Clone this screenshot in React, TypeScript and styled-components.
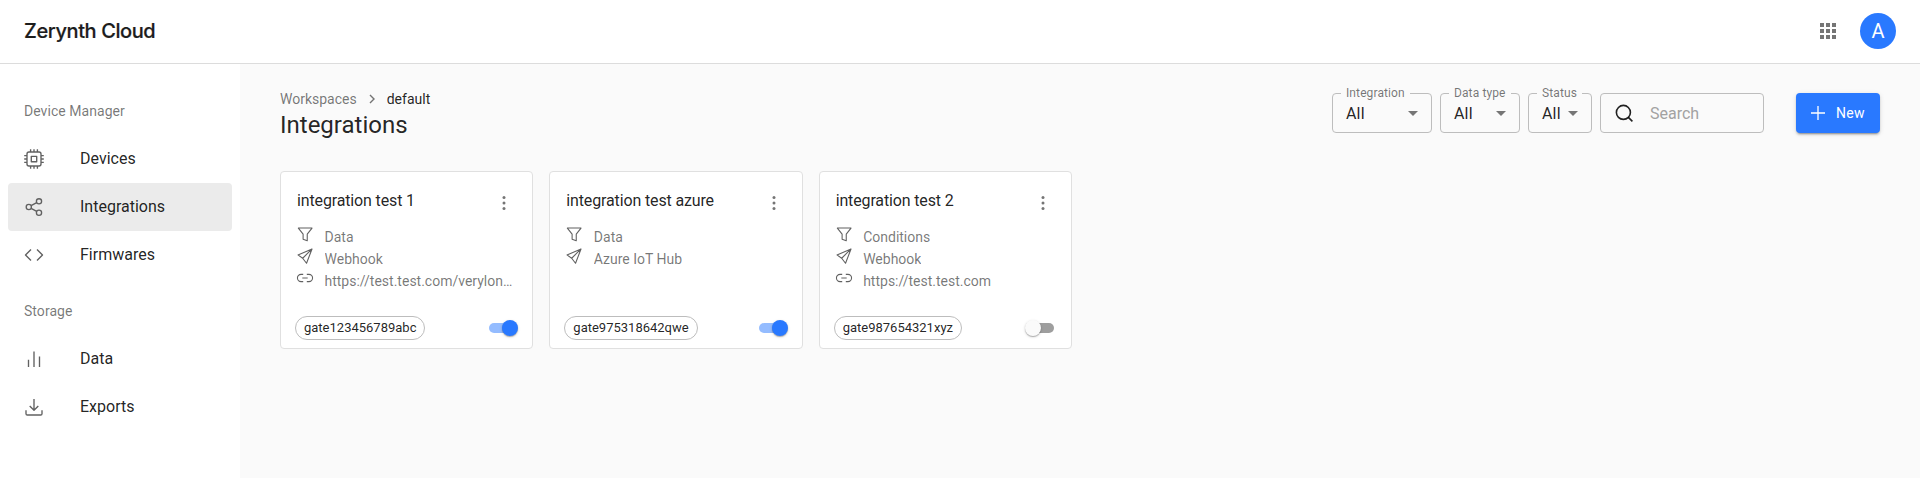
import React from 'react';
import styled, { createGlobalStyle } from 'styled-components';

const GlobalStyle = createGlobalStyle`
  *, *::before, *::after { box-sizing: border-box; }
  body {
    margin: 0;
    background: #fafafa;
    color: rgba(0, 0, 0, 0.87);
    font-family: Roboto, "Liberation Sans", sans-serif;
    font-size: 16px;
  }
`;

const Page = styled.div`
  display: flex;
  flex-direction: column;
  height: 478px;
  overflow: hidden;
`;

const Header = styled.header`
  display: flex;
  align-items: center;
  height: 64px;
  flex: none;
  padding: 0 24px 1px;
  background: #fff;
  border-bottom: 1px solid #dcdcdc;
`;

const Brand = styled.div`
  flex: 1;
  font-family: Inter, sans-serif;
  font-size: 20px;
  font-weight: 500;
  line-height: 24px;
  letter-spacing: -0.4px;
  color: #1c1c1c;
  -webkit-text-stroke: 0.2px #1c1c1c;
`;

const AppsGrid = styled.div`
  display: grid;
  grid-template-columns: repeat(3, 4px);
  grid-auto-rows: 4px;
  gap: 2px;
  margin-right: 24px;
`;

const AppsDot = styled.span`
  background: #757575;
`;

const Avatar = styled.div`
  display: flex;
  align-items: center;
  justify-content: center;
  width: 36px;
  height: 36px;
  border-radius: 50%;
  background: #2979ff;
  color: #fff;
  font-size: 20px;
`;

const Body = styled.div`
  display: flex;
  flex: 1;
`;

const Sidebar = styled.nav`
  width: 240px;
  flex: none;
  padding: 23px 8px 0;
  background: #fff;
`;

const NavHeading = styled.div`
  height: 48px;
  padding: 0 16px;
  font-size: 14px;
  line-height: 48px;
  letter-spacing: 0.05px;
  color: rgba(0, 0, 0, 0.54);
`;

const NavGroup = styled.div`
  margin-bottom: 8px;
`;

const NavItem = styled.a<{ $active?: boolean }>`
  display: flex;
  align-items: center;
  height: 48px;
  padding: 0 16px;
  border-radius: 4px;
  background: ${(p) => (p.$active ? '#ebebeb' : 'transparent')};
  line-height: 24px;
`;

const NavIcon = styled.span`
  display: flex;
  width: 56px;
  color: #616161;
`;

const Main = styled.main`
  flex: 1;
  padding: 24px 40px;
`;

const Toolbar = styled.div`
  display: flex;
  align-items: flex-start;
  justify-content: space-between;
  height: 83px;
`;

const Crumbs = styled.div`
  display: flex;
  align-items: center;
  height: 22px;
  font-size: 14px;
  color: rgba(0, 0, 0, 0.54);
`;

const CrumbSeparator = styled.svg`
  margin: 0 7px;
`;

const Current = styled.span`
  color: rgba(0, 0, 0, 0.87);
`;

const Title = styled.h1`
  margin: 0;
  font-size: 24px;
  font-weight: 400;
  line-height: 30px;
`;

const Controls = styled.div`
  display: flex;
  gap: 8px;
  padding-top: 5px;
`;

const Select = styled.div<{ $width: number }>`
  position: relative;
  display: flex;
  align-items: center;
  justify-content: space-between;
  width: ${(p) => p.$width}px;
  height: 40px;
  padding: 0 13px;
  border: 1px solid #bdbdbd;
  border-radius: 4px;
  letter-spacing: 0.15px;
`;

const SelectLabel = styled.span`
  position: absolute;
  top: -8px;
  left: 8px;
  padding: 0 5px;
  background: #fafafa;
  font-size: 12px;
  line-height: 14px;
  letter-spacing: 0.11px;
  white-space: nowrap;
  color: rgba(0, 0, 0, 0.54);
`;

const Caret = styled.span`
  border: 5px solid transparent;
  border-top-color: #757575;
  border-bottom: 0;
`;

const SearchBox = styled.div`
  display: flex;
  align-items: center;
  width: 164px;
  height: 40px;
  padding-left: 11px;
  border: 1px solid #bdbdbd;
  border-radius: 4px;
  color: #a2a2a2;
`;

const SearchIcon = styled.svg`
  margin-right: 14px;
  color: rgba(0, 0, 0, 0.87);
`;

const NewButton = styled.button`
  display: flex;
  align-items: center;
  width: 84px;
  height: 40px;
  margin-left: 24px;
  padding: 0 0 0 15px;
  gap: 11px;
  border: 0;
  border-radius: 4px;
  background: #2979ff;
  box-shadow: 0 3px 1px -2px rgba(0, 0, 0, 0.2), 0 2px 2px rgba(0, 0, 0, 0.14), 0 1px 5px rgba(0, 0, 0, 0.12);
  color: #fff;
  font: 400 14px Roboto, sans-serif;
  letter-spacing: 0.3px;
`;

const CardGrid = styled.div`
  display: grid;
  grid-template-columns: repeat(6, 1fr);
  gap: 16px;
`;

const Card = styled.article`
  display: flex;
  flex-direction: column;
  min-width: 0;
  height: 178px;
  padding: 16px 15px 8px 16px;
  border: 1px solid #e0e0e0;
  border-radius: 4px;
  background: #fff;
`;

const CardHead = styled.div`
  display: flex;
  justify-content: space-between;
  height: 37px;
  line-height: 25px;
  letter-spacing: -0.14px;
`;

const Dots = styled.svg`
  margin: 3px 1px 0 0;
  color: #757575;
`;

const Details = styled.div`
  flex: 1;
`;

const Detail = styled.div`
  display: flex;
  height: 22px;
  font-size: 14px;
  line-height: 25px;
  color: rgba(0, 0, 0, 0.54);
`;

const DetailIcon = styled.span`
  flex: none;
  width: 28.5px;
  margin-left: -1px;
  color: #616161;
  svg { display: block; }
`;

const DetailText = styled.span`
  min-width: 0;
  overflow: hidden;
  text-overflow: ellipsis;
  white-space: nowrap;
`;

const CardFoot = styled.div`
  display: flex;
  align-items: center;
  justify-content: space-between;
  margin-left: -2px;
`;

const Chip = styled.span`
  height: 24px;
  padding: 0 8px;
  border: 1px solid #bdbdbd;
  border-radius: 12px;
  font-size: 13px;
  line-height: 22px;
`;

const Track = styled.span<{ $on: boolean }>`
  display: flex;
  align-items: center;
  justify-content: ${(p) => (p.$on ? 'flex-end' : 'flex-start')};
  width: 26px;
  height: 10px;
  margin-right: 2px;
  border-radius: 5px;
  background: ${(p) => (p.$on ? '#94bcff' : '#9e9e9e')};
`;

const Thumb = styled.span<{ $on: boolean }>`
  flex: none;
  width: 16px;
  height: 16px;
  margin: 0 ${(p) => (p.$on ? '-3px' : '0')} 0 ${(p) => (p.$on ? '0' : '-3px')};
  border-radius: 50%;
  background: ${(p) => (p.$on ? '#2979ff' : '#fafafa')};
  box-shadow: 0 1px 1px rgba(0, 0, 0, 0.24), 0 1px 3px rgba(0, 0, 0, 0.16);
`;

type IconName = 'chip' | 'share' | 'code' | 'bars' | 'download' | 'filter' | 'send' | 'link';

const shapes: Record<IconName, React.ReactNode> = {
  chip: (
    <>
      <rect x="3" y="3" width="14" height="14" rx="2" />
      <rect x="7.3" y="7.3" width="5.4" height="5.4" />
      <path d="M6.6 3V.2M10 3V.2M13.4 3V.2M6.6 19.8V17M10 19.8V17M13.4 19.8V17M3 6.6H.2M3 10H.2M3 13.4H.2M19.8 6.6H17M19.8 10H17M19.8 13.4H17" />
    </>
  ),
  share: (
    <>
      <circle cx="4.8" cy="10" r="2.6" />
      <circle cx="15" cy="4.3" r="2.6" />
      <circle cx="15" cy="15.7" r="2.6" />
      <path d="M7.1 8.7l5.6-3.1M7.1 11.3l5.6 3.1" />
    </>
  ),
  code: <path d="M7 4.5L1.5 10 7 15.5M13 4.5l5.5 5.5-5.5 5.5" />,
  bars: <path d="M4.5 18v-7.3M10 18V2.6M15.5 18V7.5" />,
  download: <path d="M10 2v11M5.7 9L10 13.3 14.3 9M2 13.3v3.4c0 .9.6 1.3 1.3 1.3h13.4c.7 0 1.3-.5 1.3-1.3v-3.4" />,
  filter: <path d="M2.6 3.4h15.2L12.5 10.2v7.3L7.9 15.8v-5.6z" />,
  send: <path d="M17.8 2.2L2.2 8.8l5.2 3.7 4.3 5.6zM17.8 2.2L7.4 12.5" />,
  link: <path d="M8 6H5.6a4 4 0 0 0 0 8H8M12 6h2.4a4 4 0 0 1 0 8H12M7 10h6" />,
};

function Icon({ name, size = 20, stroke = 1.35 }: { name: IconName; size?: number; stroke?: number }) {
  return (
    <svg
      width={size}
      height={size}
      viewBox="0 0 20 20"
      fill="none"
      stroke="currentColor"
      strokeWidth={stroke}
      strokeLinejoin="round"
    >
      {shapes[name]}
    </svg>
  );
}

const nav: { heading: string; items: { label: string; icon: IconName; active?: boolean }[] }[] = [
  {
    heading: 'Device Manager',
    items: [
      { label: 'Devices', icon: 'chip' },
      { label: 'Integrations', icon: 'share', active: true },
      { label: 'Firmwares', icon: 'code' },
    ],
  },
  {
    heading: 'Storage',
    items: [
      { label: 'Data', icon: 'bars' },
      { label: 'Exports', icon: 'download' },
    ],
  },
];

const filters = [
  { label: 'Integration', width: 100 },
  { label: 'Data type', width: 80 },
  { label: 'Status', width: 64 },
];

const integrations: { name: string; details: [IconName, string][]; gate: string; on: boolean }[] = [
  {
    name: 'integration test 1',
    details: [['filter', 'Data'], ['send', 'Webhook'], ['link', 'https://test.test.com/verylongurl']],
    gate: 'gate123456789abc',
    on: true,
  },
  {
    name: 'integration test azure',
    details: [['filter', 'Data'], ['send', 'Azure IoT Hub']],
    gate: 'gate975318642qwe',
    on: true,
  },
  {
    name: 'integration test 2',
    details: [['filter', 'Conditions'], ['send', 'Webhook'], ['link', 'https://test.test.com']],
    gate: 'gate987654321xyz',
    on: false,
  },
];

export default function App() {
  return (
    <Page>
      <GlobalStyle />
      <Header>
        <Brand>Zerynth Cloud</Brand>
        <AppsGrid>
          {Array.from({ length: 9 }, (_, i) => <AppsDot key={i} />)}
        </AppsGrid>
        <Avatar>A</Avatar>
      </Header>
      <Body>
        <Sidebar>
          {nav.map((group) => (
            <NavGroup key={group.heading}>
              <NavHeading>{group.heading}</NavHeading>
              {group.items.map((item) => (
                <NavItem key={item.label} $active={item.active}>
                  <NavIcon><Icon name={item.icon} /></NavIcon>
                  {item.label}
                </NavItem>
              ))}
            </NavGroup>
          ))}
        </Sidebar>
        <Main>
          <Toolbar>
            <div>
              <Crumbs>
                Workspaces
                <CrumbSeparator width="16" height="16" viewBox="0 0 16 16" fill="none" stroke="currentColor" strokeWidth="1.4">
                  <path d="M6 4l4 4-4 4" />
                </CrumbSeparator>
                <Current>default</Current>
              </Crumbs>
              <Title>Integrations</Title>
            </div>
            <Controls>
              {filters.map((f) => (
                <Select key={f.label} $width={f.width}>
                  <SelectLabel>{f.label}</SelectLabel>
                  All
                  <Caret />
                </Select>
              ))}
              <SearchBox>
                <SearchIcon width="24" height="24" viewBox="0 0 24 24" fill="none" stroke="currentColor" strokeWidth="1.6">
                  <circle cx="11.4" cy="11.4" r="7" />
                  <path d="M16.4 16.4l4 4" />
                </SearchIcon>
                Search
              </SearchBox>
              <NewButton>
                <svg width="14" height="14" viewBox="0 0 14 14" stroke="currentColor" strokeWidth="1.3">
                  <path d="M7 0v14M0 7h14" />
                </svg>
                New
              </NewButton>
            </Controls>
          </Toolbar>
          <CardGrid>
            {integrations.map((item) => (
              <Card key={item.name}>
                <CardHead>
                  {item.name}
                  <Dots width="24" height="24" viewBox="0 0 24 24" fill="currentColor">
                    <circle cx="12" cy="6.5" r="1.5" />
                    <circle cx="12" cy="12" r="1.5" />
                    <circle cx="12" cy="17.5" r="1.5" />
                  </Dots>
                </CardHead>
                <Details>
                  {item.details.map(([icon, text]) => (
                    <Detail key={text}>
                      <DetailIcon><Icon name={icon} size={18} stroke={1.2} /></DetailIcon>
                      <DetailText>{text}</DetailText>
                    </Detail>
                  ))}
                </Details>
                <CardFoot>
                  <Chip>{item.gate}</Chip>
                  <Track $on={item.on}><Thumb $on={item.on} /></Track>
                </CardFoot>
              </Card>
            ))}
          </CardGrid>
        </Main>
      </Body>
    </Page>
  );
}
